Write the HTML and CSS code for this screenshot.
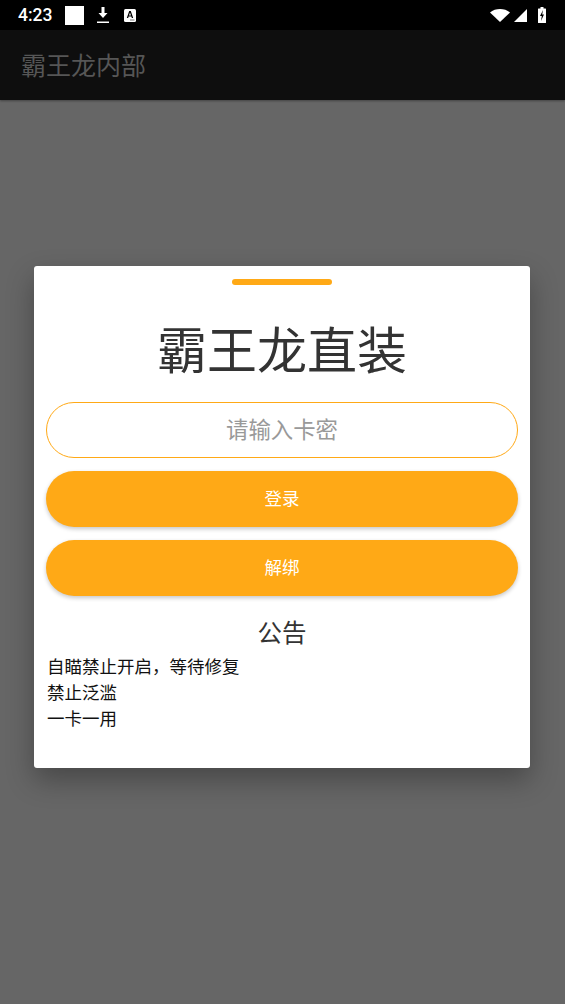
FILE: index.html
```html
<!DOCTYPE html>
<html lang="zh-CN">
<head>
<meta charset="utf-8">
<title>霸王龙内部</title>
<link rel="stylesheet" href="styles.css">
</head>
<body>
<div class="phone">
  <header class="status">
    <span class="time">4:23</span>
    <span class="sq"></span>
    <svg class="ic-dl" viewBox="0 0 12 16" width="12" height="16"><path d="M4.500 0h3v6h3L6 11 1.500 6h3z" fill="#fff"/><rect x="0" y="14.500" width="12" height="1.500" fill="#fff"/></svg>
    <svg class="ic-a" viewBox="0 0 12 13" width="12" height="13"><rect width="12" height="13" rx="1.500" fill="#fff"/><path d="M2.800 9 5.200 2h1.600L9.200 9H7.800l-.4-1.400H4.600L4.200 9zM5 6.500h2L6 3.400z" fill="#000"/><rect x="6" y="10.500" width="4.500" height="1" fill="#777"/></svg>
    <span class="spacer"></span>
    <svg class="ic-wifi" viewBox="0 0 20 13" width="20" height="13"><path d="M0 3.500C5.500-1.100 14.500-1.100 20 3.500L10 13z" fill="#fff"/></svg>
    <svg class="ic-sig" viewBox="0 0 13 13" width="13" height="13"><path d="M13 0v13H0z" fill="#fff"/></svg>
    <svg class="ic-bat" viewBox="0 0 8 16" width="8" height="16"><path d="M2.500 0h3v1.500h2a.5.5 0 0 1 .5.500V15.500a.5.500 0 0 1-.5.500H.5a.5.500 0 0 1-.5-.5V2a.5.500 0 0 1 .5-.5h2z" fill="#fff"/><path d="M5 3 2 9h1.800L3 14l3-6.500H4.200z" fill="#000"/></svg>
  </header>
  <div class="appbar">霸王龙内部</div>
  <main class="scrim">
    <section class="card">
      <div class="handle"></div>
      <h1 class="title">霸王龙直装</h1>
      <input class="field" type="text" placeholder="请输入卡密">
      <button class="btn" type="button">登录</button>
      <button class="btn" type="button">解绑</button>
      <h2 class="notice-title">公告</h2>
      <div class="notice">
        <p>自瞄禁止开启，等待修复</p>
        <p>禁止泛滥</p>
        <p>一卡一用</p>
      </div>
    </section>
  </main>
</div>
</body>
</html>
```
FILE: styles.css
```css
* { box-sizing: border-box; }
html, body { margin: 0; padding: 0; height: 100%; overflow: hidden; }
body { font-family: "Noto Sans CJK SC", Roboto, sans-serif; background: #666; }
.phone { display: flex; flex-direction: column; height: 1004px; width: 565px; }
.status { height: 30px; background: #000; display: flex; align-items: center; padding: 0 19px 0 18px; flex: none; }
.time { font-family: Roboto, sans-serif; font-size: 17.500px; color: #fff; font-weight: 500; width: 47px; line-height: 30px; }
.sq { width: 19px; height: 19px; background: #fff; }
.ic-dl { margin-left: 13px; }
.ic-a { margin-left: 15px; }
.spacer { flex: 1; }
.ic-sig { margin-left: 4px; }
.ic-bat { margin-left: 11px; }
.appbar { height: 70px; flex: none; background: #0e0e0e; color: #565656; font-size: 25px; line-height: 68px; padding-left: 21px; box-shadow: 0 1px 2px rgba(0,0,0,.35); position: relative; }
.scrim { flex: 1; background: #666; padding: 166px 35px 0 34px; }
.card { background: #fff; height: 502px; border-radius: 3px; padding: 13px 12px 0; box-shadow: 0 12px 28px rgba(0,0,0,.3); display: flex; flex-direction: column; }
.handle { width: 100px; height: 6px; border-radius: 3px; background: #ffa916; align-self: center; }
.title { margin: 29px 0 0; font-size: 50px; font-weight: 400; line-height: 66px; height: 66px; color: #333; text-align: center; }
.field { margin-top: 22px; height: 56px; width: 100%; flex: none; border: 1px solid #ffa916; border-radius: 28px; background: #fff; text-align: center; font: 22.400px "Noto Sans CJK SC", sans-serif; outline: none; padding: 0 20px 5px; }
.field::placeholder { color: #999; opacity: 1; }
.btn { margin-top: 13px; height: 56px; flex: none; width: 100%; border: 0; border-radius: 28px; background: #ffa916; color: #fff; font: 17.500px "Noto Sans CJK SC", sans-serif; padding: 0 0 4px; box-shadow: 0 2px 4px rgba(0,0,0,.22); }
.notice-title { margin: 20px 0 0; font-size: 24.500px; font-weight: 400; line-height: 32px; color: #333; text-align: center; }
.notice { margin-top: 5px; padding-left: 1px; font-size: 17.500px; line-height: 26px; color: #111; }
.notice p { margin: 0; }
```
